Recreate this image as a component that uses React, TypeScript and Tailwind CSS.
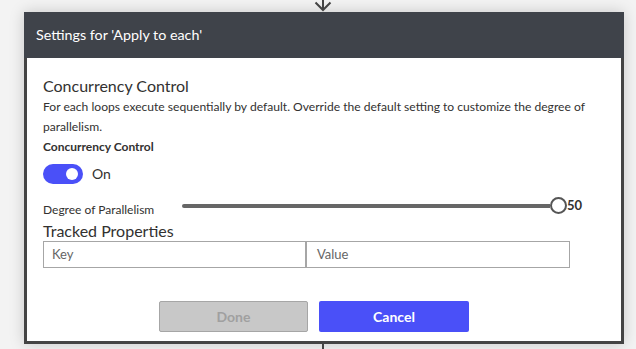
import { useState } from 'react';

export default function App() {
  const [on, setOn] = useState(true);

  return (
    <div className="relative h-[349px] w-[636px] overflow-hidden bg-[#f3f3f3] font-['Lato',sans-serif] text-[#323130]">
      {/* connector arrow */}
      <div className="flex h-[12px] pl-[314px]">
        <svg width="18" height="12" viewBox="0 0 18 12" fill="none" stroke="#444" strokeWidth="2">
          <path d="M9 0v10" />
          <path d="M1.5 2.5L9 10l7.5-7.5" />
        </svg>
      </div>

      <div className="ml-[24px] w-[600px] shadow-[0_0_14px_rgba(0,0,0,0.18)]">
        {/* header */}
        <div className="flex h-[46px] items-center bg-[#3f434a] pl-[12px] text-[14.3px] text-white">
          Settings for 'Apply to each'
        </div>

        {/* body */}
        <div className="border-x-[3px] border-b-[3px] border-[#444] bg-white px-[16px] pt-[17px] pb-[9px]">
          <div className="text-[16px] leading-[22px]">Concurrency Control</div>
          <p className="text-[12.1px] leading-[20px]">
            For each loops execute sequentially by default. Override the default setting to customize the degree of
            parallelism.
          </p>
          <div className="mt-[1px] text-[12px] font-bold leading-[18px]">Concurrency Control</div>

          <div className="mt-[7px] flex items-center gap-[9px]">
            <button
              onClick={() => setOn(!on)}
              className="flex h-[20px] w-[40px] items-center justify-end rounded-full bg-[#4a50f8] pr-[5px]"
            >
              <span className="h-[12px] w-[12px] rounded-full bg-white" />
            </button>
            <span className="text-[14px]">{on ? 'On' : 'Off'}</span>
          </div>

          <div className="mt-[13px] flex items-end">
            <div className="w-[139px] text-[12px] leading-[16px]">Degree of Parallelism</div>
            <div className="mb-[4px] flex items-center">
              <div className="h-[4px] w-[368px] rounded-l-full bg-[#666]" />
              <div className="h-[17px] w-[17px] rounded-full border-2 border-[#555] bg-white" />
              <span className="text-[13px] font-bold leading-none">50</span>
            </div>
          </div>

          <div className="mt-[3px] text-[16px] leading-[20px]">Tracked Properties</div>
          <div className="flex h-[27px] w-[527px] border border-[#a6a6a6] text-[13px] text-[#666]">
            <div className="flex w-[263px] items-center border-r-2 border-[#a6a6a6] pl-[8px]">Key</div>
            <div className="flex flex-1 items-center pl-[10px]">Value</div>
          </div>

          <div className="mt-[33px] flex gap-[11px] pl-[116px]">
            <button className="h-[31px] w-[149px] rounded-[2px] border border-[#a6a6a6] bg-[#c8c8c8] text-[14px] font-bold text-[#a0a0a0]">
              Done
            </button>
            <button className="h-[31px] w-[150px] rounded-[2px] bg-[#4a50f8] text-[14px] font-bold text-white">
              Cancel
            </button>
          </div>
        </div>
      </div>

      <div className="ml-[322px] h-[6px] w-[2px] bg-[#444]" />
    </div>
  );
}
